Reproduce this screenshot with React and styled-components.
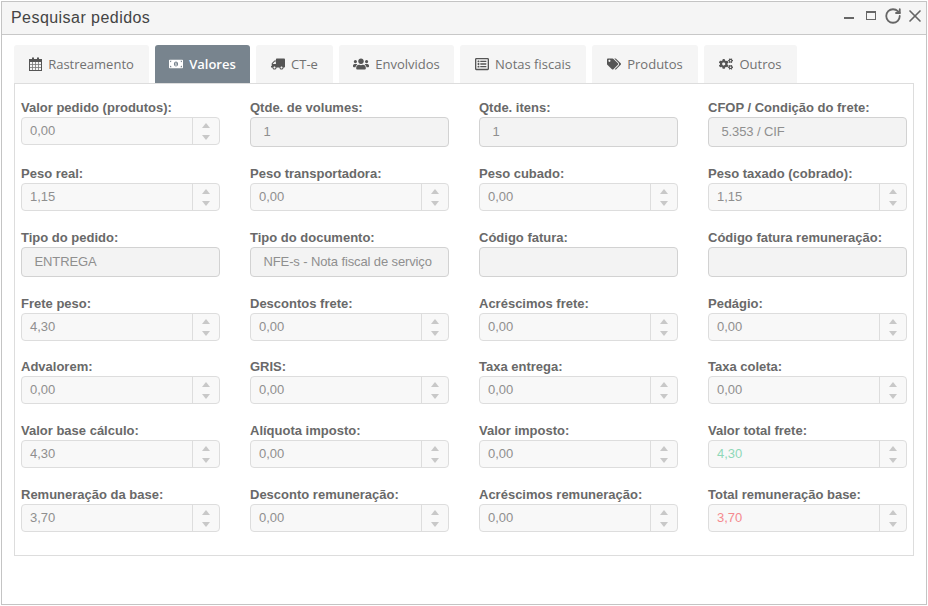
import React from "react";
import styled, { createGlobalStyle } from "styled-components";
import {
  FaMoneyBillAlt,
  FaTruck,
  FaUsers,
  FaRegListAlt,
  FaTags,
  FaCogs,
} from "react-icons/fa";
import { RotateCw, X } from "lucide-react";

const GlobalStyle = createGlobalStyle`
  html, body {
    margin: 0;
    padding: 0;
    background: #fff;
  }
  * {
    box-sizing: border-box;
  }
`;

const Window = styled.div`
  width: 926px;
  height: 604px;
  margin: 1px 0 0 1px;
  border: 1px solid #c4c4c4;
  background: #fff;
  font-family: "Liberation Sans", Arial, sans-serif;
`;

const Header = styled.div`
  height: 33px;
  display: flex;
  align-items: center;
  justify-content: space-between;
  padding: 0 1px 0 9px;
  background: #f5f5f5;
  border-bottom: 1px solid #c8c8c8;
`;

const Title = styled.h1`
  margin: 0;
  font-size: 16px;
  font-weight: 400;
  color: #444;
  letter-spacing: 0.45px;
`;

const WindowActions = styled.div`
  display: flex;
  align-items: center;
  gap: 8px;
  margin-bottom: 5px;
  color: #666;
  svg {
    display: block;
  }
`;

const MinimizeIcon = styled.span`
  width: 10px;
  height: 2px;
  background: #666;
  margin: 4px 4px 0 0;
`;

const MaximizeIcon = styled.span`
  width: 10px;
  height: 9px;
  border: 1px solid #666;
  border-top-width: 2px;
`;

const CloseIcon = styled(X)`
  margin-left: -5px;
`;

const Body = styled.div`
  padding: 10px 12px 0 12px;
`;

const Tabs = styled.div`
  display: flex;
  gap: 6px;
  height: 38px;
`;

const Tab = styled.div`
  display: flex;
  align-items: center;
  justify-content: center;
  gap: 6px;
  width: ${(p) => p.$width}px;
  height: 38px;
  border-radius: 3px 3px 0 0;
  background: ${(p) => (p.$active ? "#78848e" : "#f5f5f5")};
  color: ${(p) => (p.$active ? "#fff" : "#717171")};
  font-family: "Open Sans", sans-serif;
  font-size: 13px;
  font-weight: ${(p) => (p.$active ? 600 : 400)};
  svg {
    font-size: 14px;
    color: ${(p) => (p.$active ? "#fff" : "#555")};
  }
`;

const FlippedTruck = styled(FaTruck)`
  transform: scaleX(-1);
`;

const LargeUsers = styled(FaUsers)`
  && {
    font-size: 16px;
  }
`;

const Panel = styled.div`
  width: 900px;
  height: 473px;
  border: 1px solid #ddd;
  padding: 16px 6px 0 6px;
`;

const Grid = styled.div`
  display: grid;
  grid-template-columns: repeat(4, 199px);
  column-gap: 30px;
`;

const Field = styled.div`
  display: flex;
  flex-direction: column;
  height: ${(p) => p.$height}px;
`;

const Label = styled.label`
  height: 17px;
  font-size: 13px;
  font-weight: 700;
  line-height: 15px;
  color: #696969;
  white-space: nowrap;
`;

const TextInput = styled.div`
  height: 30px;
  display: flex;
  align-items: center;
  padding: 0 13px 1px 12.5px;
  background: #f3f3f3;
  border: 1px solid #d2d2d2;
  border-radius: 4px;
  font-size: 13px;
  letter-spacing: -0.12px;
  color: #8f8f8f;
  white-space: nowrap;
  overflow: hidden;
`;

const SpinBox = styled.div`
  height: 28px;
  display: flex;
  background: #f8f8f8;
  border: 1px solid #ddd;
  border-radius: 4px;
`;

const SpinValue = styled.div`
  flex: 1;
  display: flex;
  align-items: center;
  padding: 0 0 2px 8px;
  font-size: 13px;
  color: ${(p) => p.$color || "#8f8f8f"};
`;

const SpinButtons = styled.div`
  width: 27px;
  border-left: 1px solid #ddd;
  display: flex;
  flex-direction: column;
  align-items: center;
  justify-content: center;
  gap: 7px;
`;

const SpinArrow = styled.span`
  width: 0;
  height: 0;
  border-left: 4px solid transparent;
  border-right: 4px solid transparent;
  ${(p) =>
    p.$up ? "border-bottom: 5px solid #c8c8c8;" : "border-top: 5px solid #c8c8c8;"}
`;

// calendario no estilo do fa-calendar antigo, com a grade vazada
const CalendarIcon = () => (
  <svg width="13" height="14" viewBox="0 0 13 14" fill="none">
    <rect x="0.5" y="2.5" width="12" height="11" stroke="#555" />
    <rect x="0.5" y="2" width="12" height="3" fill="#555" />
    <rect x="3" y="0.5" width="2" height="3" fill="#555" />
    <rect x="8" y="0.5" width="2" height="3" fill="#555" />
    <path d="M3.5 5v8M6.5 5v8M9.5 5v8M1 7.5h11M1 10.5h11" stroke="#777" strokeWidth="0.8" />
  </svg>
);

const tabs = [
  { label: "Rastreamento", icon: <CalendarIcon />, width: 135 },
  { label: "Valores", icon: <FaMoneyBillAlt />, width: 95, active: true },
  { label: "CT-e", icon: <FlippedTruck />, width: 77 },
  { label: "Envolvidos", icon: <LargeUsers />, width: 115 },
  { label: "Notas fiscais", icon: <FaRegListAlt />, width: 126 },
  { label: "Produtos", icon: <FaTags />, width: 106 },
  { label: "Outros", icon: <FaCogs />, width: 93 },
];

const rows = [
  {
    height: 66,
    fields: [
      { label: "Valor pedido (produtos):", value: "0,00", spin: true },
      { label: "Qtde. de volumes:", value: "1" },
      { label: "Qtde. itens:", value: "1" },
      { label: "CFOP / Condição do frete:", value: "5.353 / CIF" },
    ],
  },
  {
    height: 64,
    fields: [
      { label: "Peso real:", value: "1,15", spin: true },
      { label: "Peso transportadora:", value: "0,00", spin: true },
      { label: "Peso cubado:", value: "0,00", spin: true },
      { label: "Peso taxado (cobrado):", value: "1,15", spin: true },
    ],
  },
  {
    height: 66,
    fields: [
      { label: "Tipo do pedido:", value: "ENTREGA" },
      { label: "Tipo do documento:", value: "NFE-s - Nota fiscal de serviço" },
      { label: "Código fatura:", value: "" },
      { label: "Código fatura remuneração:", value: "" },
    ],
  },
  {
    height: 63,
    fields: [
      { label: "Frete peso:", value: "4,30", spin: true },
      { label: "Descontos frete:", value: "0,00", spin: true },
      { label: "Acréscimos frete:", value: "0,00", spin: true },
      { label: "Pedágio:", value: "0,00", spin: true },
    ],
  },
  {
    height: 64,
    fields: [
      { label: "Advalorem:", value: "0,00", spin: true },
      { label: "GRIS:", value: "0,00", spin: true },
      { label: "Taxa entrega:", value: "0,00", spin: true },
      { label: "Taxa coleta:", value: "0,00", spin: true },
    ],
  },
  {
    height: 64,
    fields: [
      { label: "Valor base cálculo:", value: "4,30", spin: true },
      { label: "Alíquota imposto:", value: "0,00", spin: true },
      { label: "Valor imposto:", value: "0,00", spin: true },
      { label: "Valor total frete:", value: "4,30", spin: true, color: "#8fd8b8" },
    ],
  },
  {
    height: 64,
    fields: [
      { label: "Remuneração da base:", value: "3,70", spin: true },
      { label: "Desconto remuneração:", value: "0,00", spin: true },
      { label: "Acréscimos remuneração:", value: "0,00", spin: true },
      { label: "Total remuneração base:", value: "3,70", spin: true, color: "#f58a8f" },
    ],
  },
];

const App = () => {
  return (
    <>
      <GlobalStyle />
      <Window>
        <Header>
          <Title>Pesquisar pedidos</Title>
          <WindowActions>
            <MinimizeIcon />
            <MaximizeIcon />
            <RotateCw size={18} strokeWidth={2.4} />
            <CloseIcon size={20} strokeWidth={2} />
          </WindowActions>
        </Header>
        <Body>
          <Tabs>
            {tabs.map((tab) => (
              <Tab key={tab.label} $width={tab.width} $active={tab.active}>
                {tab.icon}
                <span>{tab.label}</span>
              </Tab>
            ))}
          </Tabs>
          <Panel>
            <Grid>
              {rows.map((row) =>
                row.fields.map((field) => (
                  <Field key={field.label} $height={row.height}>
                    <Label>{field.label}</Label>
                    {field.spin ? (
                      <SpinBox>
                        <SpinValue $color={field.color}>{field.value}</SpinValue>
                        <SpinButtons>
                          <SpinArrow $up />
                          <SpinArrow />
                        </SpinButtons>
                      </SpinBox>
                    ) : (
                      <TextInput>{field.value}</TextInput>
                    )}
                  </Field>
                ))
              )}
            </Grid>
          </Panel>
        </Body>
      </Window>
    </>
  );
};

export default App;
